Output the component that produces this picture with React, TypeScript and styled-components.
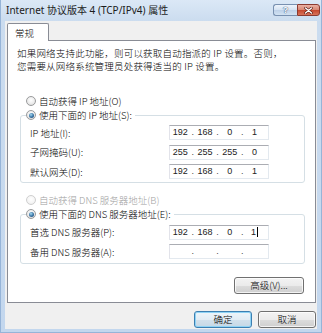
import React from 'react';
import styled, { createGlobalStyle, css } from 'styled-components';

const GlobalStyle = createGlobalStyle`
  html, body { margin: 0; padding: 0; background: #ffffff; }
  body { font-family: "Noto Sans CJK SC", "Noto Sans", sans-serif; }
  *, *::before, *::after { box-sizing: border-box; }
`;

const UI_FONT = `"Noto Sans CJK SC", "Noto Sans", sans-serif`;
const NUM_FONT = `"Liberation Sans", Arial, sans-serif`;

const Window = styled.div`
  width: 322px;
  height: 333px;
  display: flex;
  flex-direction: column;
  background: linear-gradient(to bottom, #dbe8f6 0px, #cbdcef 21px, #c3d7ee 100%);
  border-left: 1px solid #96b4d8;
  border-right: 1px solid #96b4d8;
  border-bottom: 1px solid #96b4d8;
  font-family: ${UI_FONT};
  font-weight: 300;
  font-size: 9.5px;
  color: #000;
`;

const TitleBar = styled.div`
  height: 21px;
  flex: none;
  display: flex;
  align-items: flex-start;
  justify-content: space-between;
  padding: 0 1px 0 5px;
`;

const Title = styled.div`
  font-family: "Noto Sans", "Noto Sans CJK SC", sans-serif;
  font-weight: 400;
  font-size: 10px;
  line-height: 21px;
  color: #1c1c1c;
  white-space: nowrap;
`;

const CaptionButtons = styled.div`
  display: flex;
  margin-top: 4px;
  height: 12px;
`;

const HelpButton = styled.div`
  width: 24px;
  height: 12px;
  border: 1px solid #7890b0;
  border-right: none;
  border-radius: 3px 0 0 3px;
  background: linear-gradient(to bottom, #eef4fb 0%, #d4e2f2 50%, #bcd0e8 50%, #d2e2f3 100%);
  display: flex;
  align-items: center;
  justify-content: center;
  font-family: "Liberation Sans", sans-serif;
  font-weight: bold;
  font-size: 9px;
  line-height: 1;
  color: #ffffff;
  text-shadow: 0 0 1px #2f4f78, 0 0 1px #2f4f78;
`;

const CloseButton = styled.div`
  width: 23px;
  height: 12px;
  border: 1px solid #8b3a30;
  border-radius: 0 3px 3px 0;
  background: linear-gradient(to bottom, #eab0a3 0%, #d88672 50%, #c4452c 50%, #d8735a 100%);
  display: flex;
  align-items: center;
  justify-content: center;
`;

const Body = styled.div`
  flex: 1;
  margin: 0 4px 3px 4px;
  background: #f0f0f0;
  padding: 2px 1px 0 2px;
  display: flex;
  flex-direction: column;
  min-height: 0;
`;

const TabStrip = styled.div`
  display: flex;
  position: relative;
  z-index: 1;
`;

const Tab = styled.div`
  width: 42px;
  height: 18px;
  margin-bottom: -1px;
  border: 1px solid #898c95;
  border-bottom: none;
  border-radius: 2px 2px 0 0;
  background: #ffffff;
  display: flex;
  align-items: center;
  padding-left: 7px;
  padding-top: 1px;
  font-size: 9.5px;
`;

const Panel = styled.div`
  border: 1px solid #898c95;
  background: #ffffff;
  padding: 6px 10px 8px 9px;
  display: flex;
  flex-direction: column;
`;

const Description = styled.p`
  margin: 0;
  font-size: 9.5px;
  line-height: 13px;
  white-space: nowrap;
  letter-spacing: 0.2px;
`;

const RadioRow = styled.label<{ $top: number; $disabled?: boolean }>`
  display: flex;
  align-items: center;
  gap: 3px;
  height: 13px;
  margin-top: ${p => p.$top}px;
  margin-left: 9px;
  color: ${p => (p.$disabled ? '#a0a0a0' : '#000')};
  white-space: nowrap;
`;

const RadioCircle = styled.span<{ $checked?: boolean; $disabled?: boolean }>`
  width: 10px;
  height: 10px;
  flex: none;
  border-radius: 50%;
  border: 1px solid ${p => (p.$disabled ? '#cfcfcf' : '#9a9b9c')};
  background: ${p =>
    p.$disabled
      ? 'radial-gradient(circle at 50% 40%, #ffffff 0%, #f4f4f4 60%, #e6e6e6 100%)'
      : 'radial-gradient(circle at 50% 40%, #ffffff 0%, #ececec 55%, #d2d2d2 100%)'};
  display: flex;
  align-items: center;
  justify-content: center;
  ${p =>
    p.$checked &&
    css`
      &::after {
        content: '';
        width: 5px;
        height: 5px;
        border-radius: 50%;
        background: radial-gradient(circle at 40% 35%, #a9dcf2 0%, #3d78a8 50%, #1d3f66 100%);
      }
    `}
`;

const GroupBox = styled.fieldset<{ $top: number }>`
  margin: ${p => p.$top}px 0 0 3px;
  padding: 0;
  border: 1px solid #d5dfe5;
  border-radius: 3px;
  min-width: 0;
`;

const GroupLegend = styled.legend`
  margin-left: 5px;
  padding: 0 3px 0 0;
  height: 13px;
  display: flex;
  align-items: center;
  gap: 3px;
  white-space: nowrap;
`;

const GroupRows = styled.div<{ $padTop: number; $padBottom: number }>`
  display: grid;
  grid-template-columns: 139px 100px;
  row-gap: 4.5px;
  padding: ${p => p.$padTop}px 0 ${p => p.$padBottom}px 9px;
`;

const FieldLabel = styled.span`
  height: 15px;
  display: flex;
  align-items: center;
  white-space: nowrap;
`;

const IpBox = styled.div`
  width: 100px;
  height: 15px;
  border: 1px solid #e3e9ef;
  border-top-color: #abadb3;
  border-left-color: #e2e3ea;
  background: #ffffff;
  display: flex;
  align-items: center;
  padding-right: 3px;
  font-family: ${NUM_FONT};
  font-weight: 400;
  font-size: 9px;
  color: #222;
`;

const Octet = styled.span`
  width: 20.75px;
  text-align: center;
  display: flex;
  align-items: center;
  justify-content: center;
  line-height: 13px;
`;

const Dot = styled.span`
  width: 4px;
  text-align: center;
  line-height: 13px;
  color: #444;
`;

const Caret = styled.span`
  display: inline-block;
  width: 1px;
  height: 10px;
  margin-left: 1px;
  background: #000;
`;

const ActionRow = styled.div<{ $top: number; $right: number }>`
  display: flex;
  justify-content: flex-end;
  gap: 6px;
  margin-top: ${p => p.$top}px;
  padding-right: ${p => p.$right}px;
`;

const PushButton = styled.button<{ $width: number; $isDefault?: boolean }>`
  width: ${p => p.$width}px;
  height: 17px;
  padding: 0;
  margin: 0;
  border: 1px solid #707070;
  border-radius: 3px;
  background: linear-gradient(to bottom, #f3f3f3 0%, #ebebeb 50%, #dddddd 50%, #cfcfcf 100%);
  box-shadow: inset 0 0 0 1px rgba(255, 255, 255, 0.75);
  font-family: ${UI_FONT};
  font-weight: 300;
  font-size: 9.5px;
  line-height: 15px;
  color: #000;
  white-space: nowrap;
  ${p =>
    p.$isDefault &&
    css`
      border-color: #3c7fb1;
      background: linear-gradient(to bottom, #eef5fa 0%, #e2ecf4 50%, #d2e1ec 50%, #c6d8e6 100%);
      box-shadow: inset 0 0 0 1px #8fd3f5;
    `}
`;

type IpProps = { values?: string[]; caret?: boolean };

function IpAddress({ values, caret }: IpProps) {
  const v = values ?? ['', '', '', ''];
  return (
    <IpBox>
      {v.map((o, i) => (
        <React.Fragment key={i}>
          <Octet>
            {o}
            {caret && i === 3 ? <Caret /> : null}
          </Octet>
          {i < 3 ? <Dot>.</Dot> : null}
        </React.Fragment>
      ))}
    </IpBox>
  );
}

export default function App() {
  return (
    <>
      <GlobalStyle />
      <Window>
        <TitleBar>
          <Title>Internet 协议版本 4 (TCP/IPv4) 属性</Title>
          <CaptionButtons>
            <HelpButton>?</HelpButton>
            <CloseButton>
              <svg width="9" height="7" viewBox="0 0 9 7">
                <path d="M1.5 1 L7.5 6 M7.5 1 L1.5 6" stroke="#5a1a12" strokeWidth="2.6" strokeLinecap="round" />
                <path d="M1.5 1 L7.5 6 M7.5 1 L1.5 6" stroke="#ffffff" strokeWidth="1.4" strokeLinecap="round" />
              </svg>
            </CloseButton>
          </CaptionButtons>
        </TitleBar>
        <Body>
          <TabStrip>
            <Tab>常规</Tab>
          </TabStrip>
          <Panel>
            <Description>
              如果网络支持此功能，则可以获取自动指派的 IP 设置。否则，
              <br />
              您需要从网络系统管理员处获得适当的 IP 设置。
            </Description>

            <RadioRow $top={21.5}>
              <RadioCircle />
              自动获得 IP 地址(O)
            </RadioRow>
            <GroupBox $top={1}>
              <GroupLegend>
                <RadioCircle $checked />
                使用下面的 IP 地址(S):
              </GroupLegend>
              <GroupRows $padTop={3.5} $padBottom={3}>
                <FieldLabel>IP 地址(I):</FieldLabel>
                <IpAddress values={['192', '168', '0', '1']} />
                <FieldLabel>子网掩码(U):</FieldLabel>
                <IpAddress values={['255', '255', '255', '0']} />
                <FieldLabel>默认网关(D):</FieldLabel>
                <IpAddress values={['192', '168', '0', '1']} />
              </GroupRows>
            </GroupBox>

            <RadioRow $top={10.5} $disabled>
              <RadioCircle $disabled />
              自动获得 DNS 服务器地址(B)
            </RadioRow>
            <GroupBox $top={1}>
              <GroupLegend>
                <RadioCircle $checked />
                使用下面的 DNS 服务器地址(E):
              </GroupLegend>
              <GroupRows $padTop={4} $padBottom={4}>
                <FieldLabel>首选 DNS 服务器(P):</FieldLabel>
                <IpAddress values={['192', '168', '0', '1']} caret />
                <FieldLabel>备用 DNS 服务器(A):</FieldLabel>
                <IpAddress />
              </GroupRows>
            </GroupBox>

            <ActionRow $top={13} $right={1}>
              <PushButton $width={70}>高级(V)...</PushButton>
            </ActionRow>
          </Panel>
          <ActionRow $top={8} $right={0}>
            <PushButton $width={58} $isDefault>
              确定
            </PushButton>
            <PushButton $width={58}>取消</PushButton>
          </ActionRow>
        </Body>
      </Window>
    </>
  );
}
